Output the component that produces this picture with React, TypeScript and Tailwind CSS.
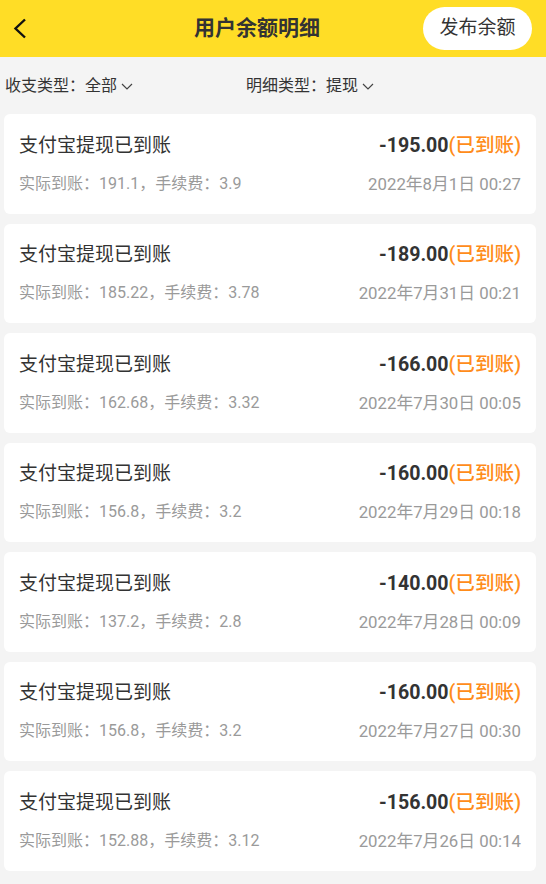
import React from "react";

const font = { fontFamily: "Roboto, 'Noto Sans CJK SC', sans-serif" };

const records = [
  { amount: "-195.00", actual: "191.1", fee: "3.9", time: "2022年8月1日 00:27" },
  { amount: "-189.00", actual: "185.22", fee: "3.78", time: "2022年7月31日 00:21" },
  { amount: "-166.00", actual: "162.68", fee: "3.32", time: "2022年7月30日 00:05" },
  { amount: "-160.00", actual: "156.8", fee: "3.2", time: "2022年7月29日 00:18" },
  { amount: "-140.00", actual: "137.2", fee: "2.8", time: "2022年7月28日 00:09" },
  { amount: "-160.00", actual: "156.8", fee: "3.2", time: "2022年7月27日 00:30" },
  { amount: "-156.00", actual: "152.88", fee: "3.12", time: "2022年7月26日 00:14" },
];

function ChevronDown() {
  return (
    <svg width="12" height="7" viewBox="0 0 12 7" className="ml-[4px] mt-[2px]">
      <path d="M1 1l5 5 5-5" fill="none" stroke="#444" strokeWidth="1.2" />
    </svg>
  );
}

function RecordCard({ amount, actual, fee, time }: (typeof records)[number]) {
  return (
    <div className="bg-white rounded-[6px] h-[99.5px] px-[15px] flex flex-col justify-center gap-[16px]">
      <div className="flex flex-row items-center justify-between">
        <p className="text-[19px] text-[#333] leading-[24px]">支付宝提现已到账</p>
        <p className="text-[19.6px] leading-[24px]">
          <span className="font-bold text-[#333]">{amount}</span>
          <span className="text-[#ff8c1a] font-medium">(已到账)</span>
        </p>
      </div>
      <div className="flex flex-row items-center justify-between text-[#9a9a9a] leading-[20px]">
        <p className="text-[16px]">
          实际到账：{actual}，手续费：{fee}
        </p>
        <p className="text-[16.8px]">{time}</p>
      </div>
    </div>
  );
}

export default function App() {
  return (
    <div className="w-[546px] h-[884px] bg-[#f4f4f4] overflow-hidden" style={font}>
      <div className="h-[57px] bg-[#ffdd26] flex flex-row items-center justify-between pl-[13px] pr-[14px]">
        <svg width="14" height="21" viewBox="0 0 14 21">
          <path d="M12 1.5L2.5 10.5 12 19.5" fill="none" stroke="#111" strokeWidth="2.4" />
        </svg>
        <p className="text-[21px] font-bold text-[#333] ml-[64px]">用户余额明细</p>
        <div className="bg-white rounded-full h-[43px] w-[109px] flex items-center justify-center text-[19px] text-[#333]">
          发布余额
        </div>
      </div>
      <div className="h-[57px] flex flex-row items-center px-[5px] text-[16px] text-[#333]">
        <div className="flex flex-row items-center w-[241px]">
          收支类型：全部
          <ChevronDown />
        </div>
        <div className="flex flex-row items-center">
          明细类型：提现
          <ChevronDown />
        </div>
      </div>
      <div className="flex flex-col gap-[10px] pl-[4px] pr-[10px] pb-4">
        {records.map((r, i) => (
          <RecordCard key={i} {...r} />
        ))}
      </div>
    </div>
  );
}
